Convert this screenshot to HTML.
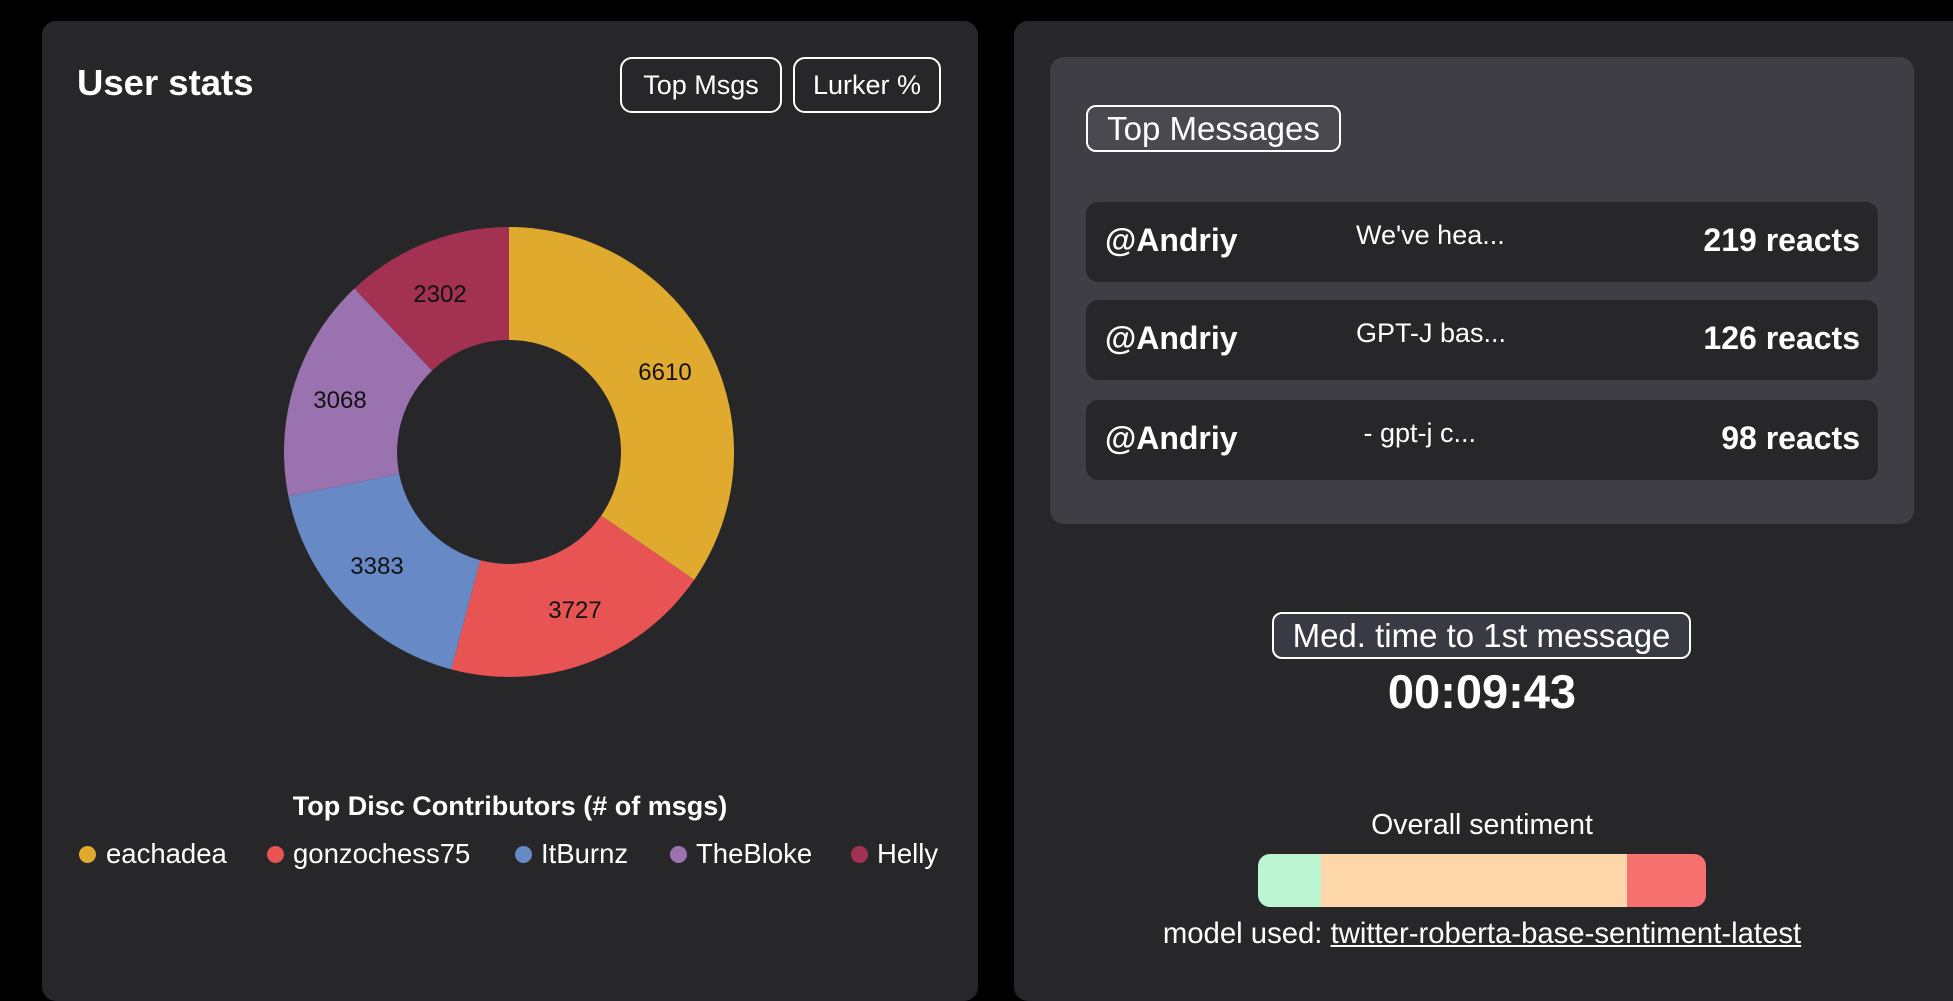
<!DOCTYPE html>
<html><head><meta charset="utf-8"><style>
*{margin:0;padding:0;box-sizing:border-box}
body{width:1953px;height:980px;background:#000;font-family:"Liberation Sans",sans-serif;color:#fff;position:relative;overflow:hidden}
.a{position:absolute}
.panel{background:#27272a;border-radius:14px}
.btn{position:absolute;border:2px solid #fff;border-radius:12px;font-size:27px;display:flex;align-items:center;justify-content:center;white-space:nowrap}
.row{position:absolute;left:1086px;width:792px;height:80px;background:#27272a;border-radius:12px}
.row .u{position:absolute;left:19px;top:20px;font-size:32px;font-weight:bold}
.row .m{position:absolute;left:270px;top:18px;font-size:27px}
.row .r{position:absolute;right:18px;top:20px;font-size:32px;font-weight:bold}
.lg{position:absolute;top:838px;font-size:27.5px;white-space:nowrap}
.dot{position:absolute;top:846px;width:17px;height:17px;border-radius:50%}
.lbl{font-size:24px;fill:#111;font-family:"Liberation Sans",sans-serif}
</style></head><body>
<div class="a panel" style="left:42px;top:21px;width:936px;height:980px"></div>
<div class="a panel" style="left:1014px;top:21px;width:960px;height:980px"></div>
<div class="a" style="left:77px;top:62px;font-size:36.5px;font-weight:bold">User stats</div>
<div class="btn" style="left:620px;top:57px;width:162px;height:56px">Top Msgs</div>
<div class="btn" style="left:793px;top:57px;width:148px;height:56px">Lurker %</div>
<svg class="a" style="left:0;top:0" width="1000" height="980">
<path d="M509 227 A225 225 0 0 1 694.2 579.8 L601.2 515.6 A112 112 0 0 0 509 340Z" fill="#e0aa2e"/>
<path d="M694.2 579.8 A225 225 0 0 1 451.2 669.4 L480.2 560.2 A112 112 0 0 0 601.2 515.6Z" fill="#e85454"/>
<path d="M451.2 669.4 A225 225 0 0 1 288.4 496.1 L399.2 473.9 A112 112 0 0 0 480.2 560.2Z" fill="#6789c6"/>
<path d="M288.4 496.1 A225 225 0 0 1 354.4 288.5 L432.1 370.6 A112 112 0 0 0 399.2 473.9Z" fill="#9b72b0"/>
<path d="M354.4 288.5 A225 225 0 0 1 509 227 L509 340 A112 112 0 0 0 432.1 370.6Z" fill="#a33152"/>
<text class="lbl" x="665" y="380" text-anchor="middle">6610</text>
<text class="lbl" x="575" y="618" text-anchor="middle">3727</text>
<text class="lbl" x="377" y="574" text-anchor="middle">3383</text>
<text class="lbl" x="340" y="408" text-anchor="middle">3068</text>
<text class="lbl" x="440" y="302" text-anchor="middle">2302</text>
</svg>
<div class="a" style="left:42px;width:936px;top:791px;text-align:center;font-size:27px;font-weight:bold">Top Disc Contributors (# of msgs)</div>
<div class="dot" style="left:79px;background:#e0aa2e"></div><div class="lg" style="left:106px">eachadea</div>
<div class="dot" style="left:267px;background:#e85454"></div><div class="lg" style="left:293px">gonzochess75</div>
<div class="dot" style="left:515px;background:#6789c6"></div><div class="lg" style="left:541px">ItBurnz</div>
<div class="dot" style="left:670px;background:#9b72b0"></div><div class="lg" style="left:696px">TheBloke</div>
<div class="dot" style="left:851px;background:#a33152"></div><div class="lg" style="left:877px">Helly</div>

<div class="a" style="left:1050px;top:57px;width:864px;height:467px;background:#3f3e44;border-radius:14px"></div>
<div class="btn" style="left:1086px;top:105px;width:255px;height:47px;font-size:33px;border-radius:10px;background:#4a4950">Top Messages</div>
<div class="row" style="top:202px"><span class="u">@Andriy</span><span class="m">We've hea...</span><span class="r">219 reacts</span></div>
<div class="row" style="top:300px"><span class="u">@Andriy</span><span class="m">GPT-J bas...</span><span class="r">126 reacts</span></div>
<div class="row" style="top:400px"><span class="u">@Andriy</span><span class="m">&nbsp;- gpt-j c...</span><span class="r">98 reacts</span></div>

<div class="btn" style="left:1272px;top:612px;width:419px;height:47px;font-size:33px;border-radius:10px;background:#3a3a44">Med. time to 1st message</div>
<div class="a" style="left:1014px;width:936px;top:664px;text-align:center;font-size:47px;font-weight:bold">00:09:43</div>
<div class="a" style="left:1014px;width:936px;top:809px;text-align:center;font-size:28.5px">Overall sentiment</div>
<div class="a" style="left:1258px;top:854px;width:448px;height:53px;border-radius:12px;overflow:hidden;display:flex">
<div style="width:63px;background:#bbf5d2"></div><div style="width:306px;background:#fdd6aa"></div><div style="flex:1;background:#f87171"></div></div>
<div class="a" style="left:1014px;width:936px;top:917px;text-align:center;font-size:29.3px;white-space:nowrap">model used: <span style="text-decoration:underline">twitter-roberta-base-sentiment-latest</span></div>
</body></html>
